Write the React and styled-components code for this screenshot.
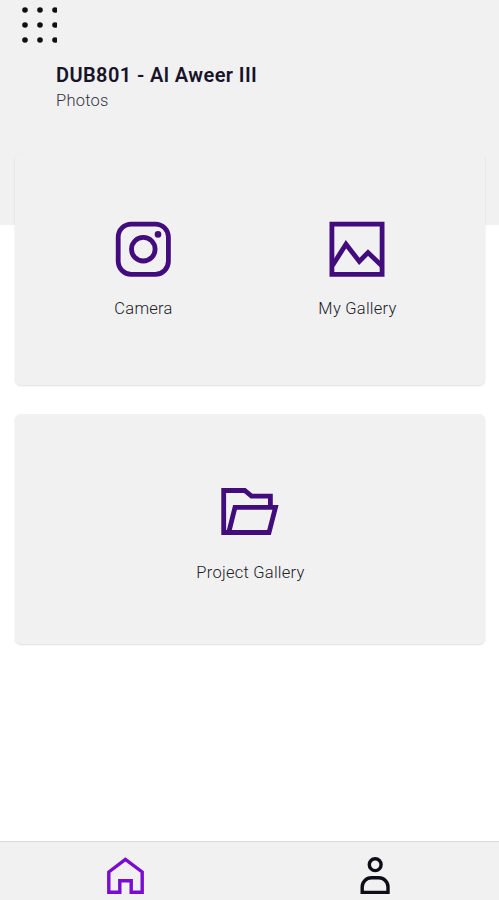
import styled, { createGlobalStyle } from 'styled-components'

const GlobalStyle = createGlobalStyle`
    * {
        box-sizing: border-box;
    }
    body {
        margin: 0;
        background-color: #ffffff;
        font-family: Roboto, 'Liberation Sans', sans-serif;
    }
`

const Screen = styled.div`
    display: flex;
    flex-direction: column;
    height: 900px;
    overflow: hidden;
`

const Header = styled.header`
    height: 225px;
    flex-shrink: 0;
    padding: 7px 22px 0;
    background-color: #f1f1f2;
`

const MenuButton = styled.div`
    display: flex;
    height: 37px;
`

const TitleBox = styled.div`
    padding: 19px 0 0 34px;
`

const Title = styled.h1`
    margin: 0;
    color: #17142a;
    font-size: 20px;
    font-weight: 600;
    line-height: 24px;
    letter-spacing: 0.41px;
    white-space: nowrap;
`

const SubTitle = styled.div`
    margin-top: 4px;
    color: #34343c;
    font-size: 16.5px;
    font-weight: 300;
    line-height: 20px;
    letter-spacing: 0.25px;
`

const Content = styled.main`
    display: flex;
    flex-direction: column;
    flex: 1;
    gap: 29px;
    margin-top: -72px;
    padding: 0 14px 0 15px;
`

const Card = styled.section`
    display: grid;
    grid-template-columns: repeat(${(props) => props.$columns}, ${(props) => (props.$columns > 1 ? '214px' : '1fr')});
    justify-content: center;
    justify-items: center;
    align-content: start;
    height: ${(props) => props.$height}px;
    padding-top: ${(props) => props.$top}px;
    border-radius: 6px;
    background-color: #f1f1f2;
    box-shadow: 0 1px 2px rgba(0, 0, 0, 0.13);
`

const Item = styled.div`
    display: flex;
    flex-direction: column;
    align-items: center;
    gap: ${(props) => props.$gap || 22}px;
    color: #430c7c;
`

const Label = styled.span`
    padding-left: 1px;
    color: #202026;
    font-size: 16.5px;
    font-weight: 300;
    line-height: 20px;
    letter-spacing: 0.25px;
    white-space: nowrap;
`

const TabBar = styled.nav`
    display: grid;
    grid-template-columns: 1fr 1fr;
    justify-items: center;
    flex-shrink: 0;
    height: 59px;
    padding: 15px 0 0 1px;
    border-top: 1px solid #d9d9dc;
    background-color: #f1f1f2;
`

const Tab = styled.div`
    display: flex;
    color: ${(props) => (props.$active ? '#7a0bd0' : '#0e0c18')};
`

function DotsIcon() {
    const steps = [3, 18, 33]

    return (
        <svg width="35" height="37" viewBox="0 0 35 37" fill="#101014">
            {steps.map((y) => steps.map((x) => <circle key={`${x}-${y}`} cx={x} cy={y} r="2.8" />))}
        </svg>
    )
}

function CameraIcon() {
    return (
        <svg width="56" height="56" viewBox="0 0 56 56" fill="none" stroke="currentColor" strokeWidth="4.8">
            <rect x="3.2" y="3.1" width="50.2" height="50.2" rx="13" />
            <circle cx="28.3" cy="28.2" r="11.8" />
            <circle cx="43" cy="13.4" r="3.3" fill="currentColor" stroke="none" />
        </svg>
    )
}

function PictureIcon() {
    return (
        <svg width="56" height="56" viewBox="0 0 56 56" fill="none" stroke="currentColor" strokeWidth="4.8">
            <path d="M2.9 3.1h50.2v50.2H2.9z" />
            <path d="M3.5 44.5L17 23.2L30.3 40.4L39 31.6L53 45" />
        </svg>
    )
}

function FolderIcon() {
    return (
        <svg width="58" height="48" viewBox="0 0 58 48" fill="none" stroke="currentColor" strokeWidth="4.8">
            <path d="M49.4 20V9.2H30.5L23.7 3.5H2.7v42h5L14 20.4h40.5L48 45.5H5" />
        </svg>
    )
}

function HomeIcon() {
    return (
        <svg width="38" height="38" viewBox="0 0 38 38" fill="none" stroke="currentColor" strokeWidth="3.4">
            <path d="M1.8 35.3V15L18.4 2.3L35.2 15v20.3H24.2V23.8h-11.4v11.5z" />
        </svg>
    )
}

function UserIcon() {
    return (
        <svg width="30" height="38" viewBox="0 0 30 38" fill="none" stroke="currentColor" strokeWidth="3.4">
            <circle cx="15.2" cy="7.7" r="5.9" />
            <path d="M2.2 35.4V30a9.2 9.2 0 0 1 9.2-9.2h7.4a9.2 9.2 0 0 1 9.2 9.2v5.4z" />
        </svg>
    )
}

export default function App() {
    return (
        <Screen>
            <GlobalStyle />
            <Header>
                <MenuButton>
                    <DotsIcon />
                </MenuButton>
                <TitleBox>
                    <Title>DUB801 - Al Aweer III</Title>
                    <SubTitle>Photos</SubTitle>
                </TitleBox>
            </Header>
            <Content>
                <Card $columns={2} $height={232} $top={68}>
                    <Item>
                        <CameraIcon />
                        <Label>Camera</Label>
                    </Item>
                    <Item>
                        <PictureIcon />
                        <Label>My Gallery</Label>
                    </Item>
                </Card>
                <Card $columns={1} $height={230} $top={73}>
                    <Item $gap={28}>
                        <FolderIcon />
                        <Label>Project Gallery</Label>
                    </Item>
                </Card>
            </Content>
            <TabBar>
                <Tab $active>
                    <HomeIcon />
                </Tab>
                <Tab>
                    <UserIcon />
                </Tab>
            </TabBar>
        </Screen>
    )
}
